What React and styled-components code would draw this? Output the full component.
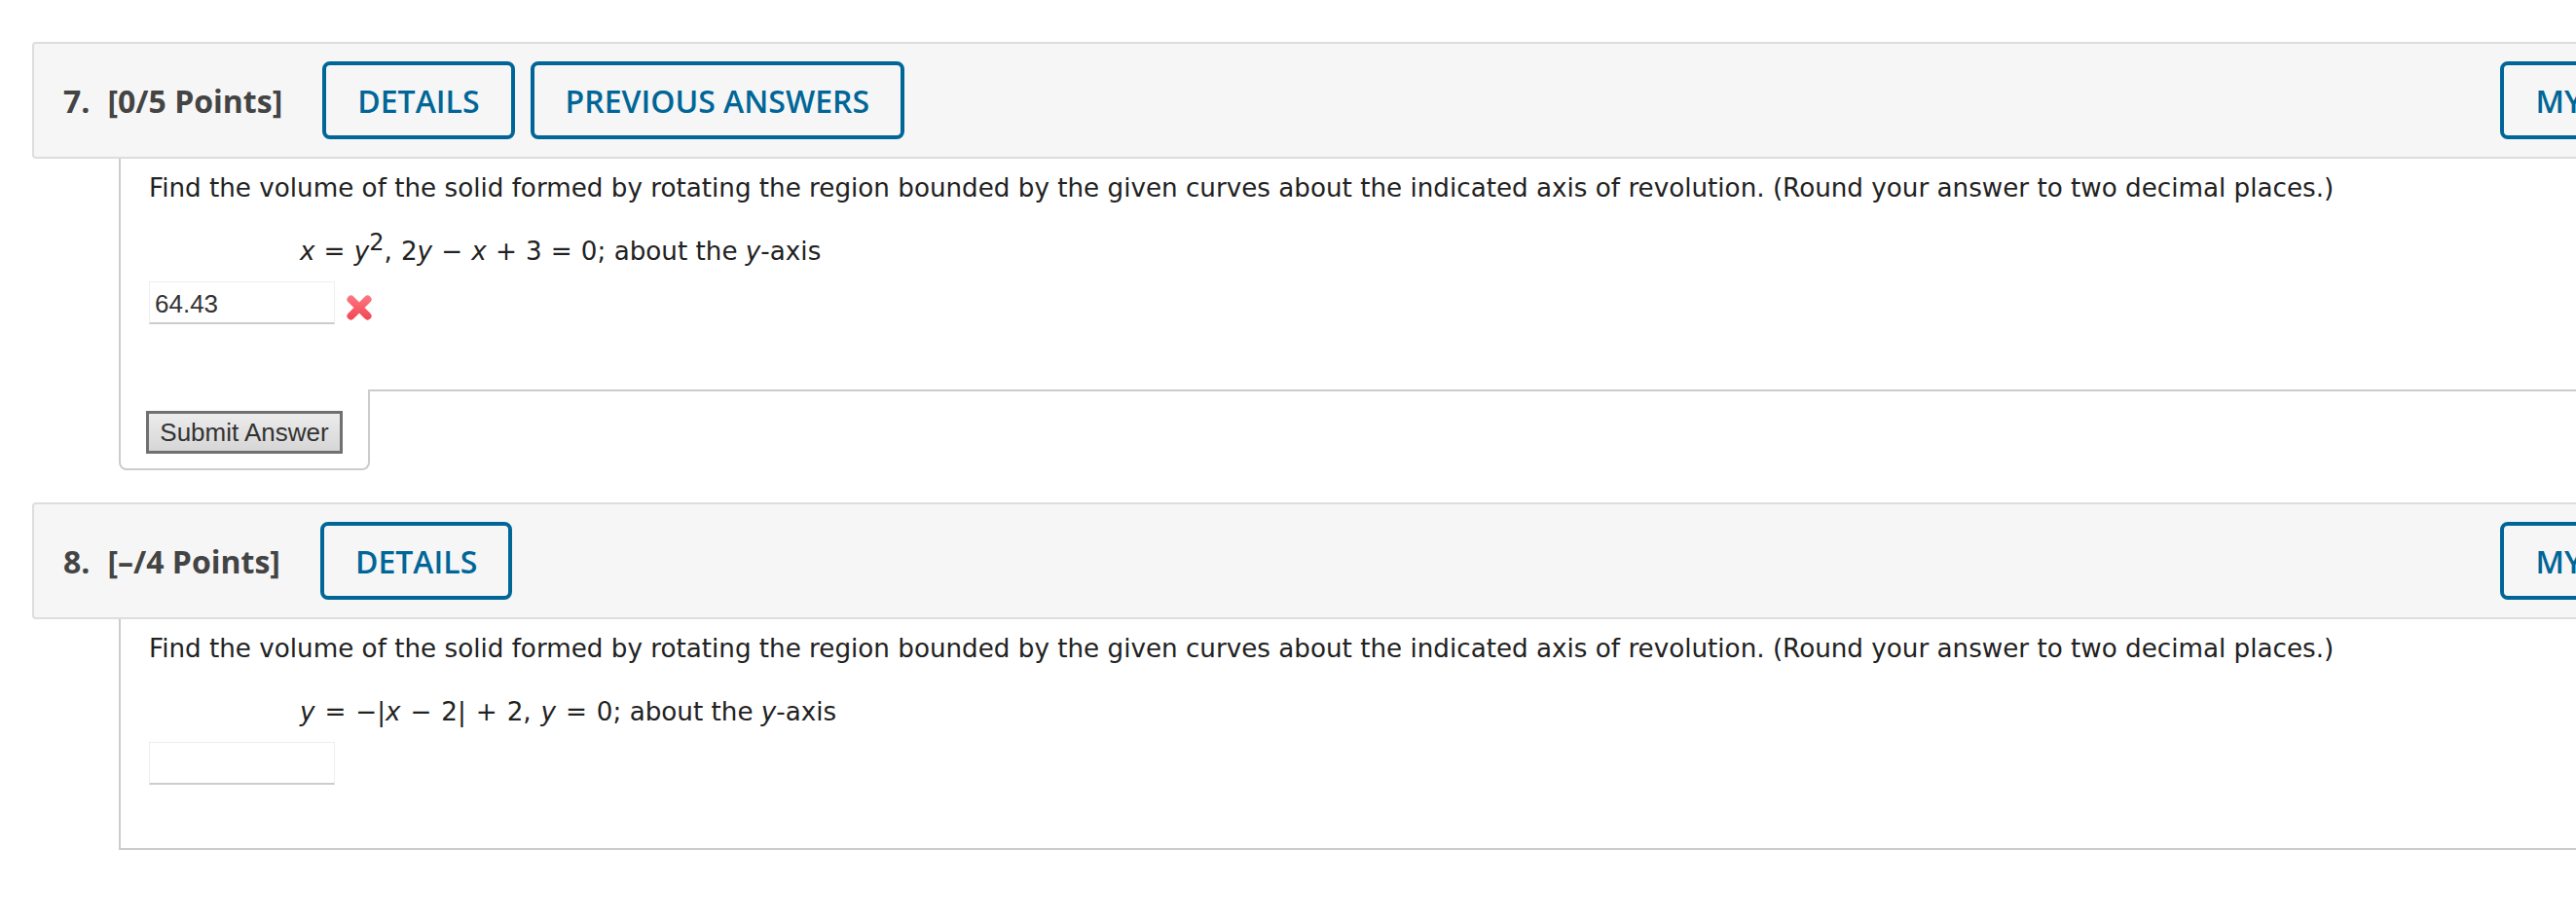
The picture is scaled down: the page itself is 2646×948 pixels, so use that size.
import React from 'react'
import styled, { createGlobalStyle } from 'styled-components'

const Global = createGlobalStyle`
  html, body { margin: 0; padding: 0; background: #fff; overflow: hidden; }
  body { width: 2646px; height: 948px; }
`

const Page = styled.div`
  width: 2842px;
  padding: 43px 0 0 33px;
  box-sizing: border-box;
  color: #222;
  font-family: "DejaVu Sans", Verdana, sans-serif;
`

const Question = styled.section`
  margin-bottom: ${p => p.$gap || 0}px;
`

const Header = styled.header`
  display: flex;
  align-items: center;
  height: 120px;
  box-sizing: border-box;
  padding: 0 39px 0 30px;
  background: #f6f6f6;
  border: 2px solid #ddd;
  border-radius: 4px;
`

const Title = styled.h2`
  margin: 0 41px 0 0;
  font: 700 32px "Open Sans", sans-serif;
  color: #444;
  white-space: nowrap;
  span { margin-right: 18px; }
`

const ActionButton = styled.button`
  height: 80px;
  padding: 0 32px;
  margin-right: 16px;
  box-sizing: border-box;
  background: transparent;
  border: 4px solid #006698;
  border-radius: 8px;
  color: #006698;
  font: 600 32px "Open Sans", sans-serif;
  white-space: nowrap;
  ${p => p.$right && 'margin-left: auto; margin-right: 0;'}
`

const Body = styled.div`
  margin-left: 89px;
  padding: 10px 0 0 29px;
  height: ${p => p.$height}px;
  box-sizing: border-box;
  border-left: 2px solid #ccc;
  ${p => p.$closed && 'border-bottom: 2px solid #ccc;'}
`

const Prompt = styled.p`
  margin: 0;
  font-size: 26.2px;
  line-height: 40px;
`

const Equation = styled.p`
  margin: 25px 0 0 155px;
  font-size: 26.2px;
  line-height: 40px;
  white-space: nowrap;
  i { font-style: italic; }
  sup { font-size: 24px; line-height: 0; }
`

const MathPart = styled.span`
  word-spacing: ${p => p.$spacing}px;
`

const AnswerRow = styled.div`
  display: flex;
  align-items: center;
  gap: 11px;
  margin-top: 11px;
`

const AnswerInput = styled.input`
  width: 191px;
  height: 44px;
  box-sizing: border-box;
  padding: 3px 5px 0;
  background: #fff;
  color: #333;
  border: 1px solid #eee;
  border-bottom: 2px solid #ccc;
  font: 26px "Liberation Sans", Arial, sans-serif;
  outline: none;
`

const WrongMark = styled.svg`
  width: 28px;
  height: 28px;
  margin-top: 9px;
`

const Footer = styled.div`
  display: flex;
  margin-left: 89px;
`

const SubmitTab = styled.div`
  width: 258px;
  height: 83px;
  box-sizing: border-box;
  padding: 22px 0 0 26px;
  border-left: 2px solid #ccc;
  border-right: 2px solid #ccc;
  border-bottom: 2px solid #ccc;
  border-radius: 0 0 8px 8px;
`

const Rule = styled.div`
  flex: 1;
  border-top: 2px solid #ccc;
`

const SubmitButton = styled.button`
  display: block;
  width: 202px;
  height: 44px;
  padding: 0;
  box-sizing: border-box;
  border: 3px solid #707070;
  background: linear-gradient(#ececec, #d6d6d6);
  color: #333;
  font: 26px "Liberation Sans", Arial, sans-serif;
`

export default function App() {
  return (
    <Page>
      <Global />
      <Question $gap={33}>
        <Header>
          <Title><span>7.</span>[0/5 Points]</Title>
          <ActionButton>DETAILS</ActionButton>
          <ActionButton>PREVIOUS ANSWERS</ActionButton>
          <ActionButton $right>MY NOTES</ActionButton>
        </Header>
        <Body $height={237}>
          <Prompt>Find the volume of the solid formed by rotating the region bounded by the given curves about the indicated axis of revolution. (Round your answer to two decimal places.)</Prompt>
          <Equation>
            <MathPart $spacing={0.8}><i>x</i> = <i>y</i><sup>2</sup>, 2<i>y</i> − <i>x</i> + 3 = 0;</MathPart> about the <i>y</i>-axis
          </Equation>
          <AnswerRow>
            <AnswerInput defaultValue="64.43" />
            <WrongMark viewBox="0 0 28 28">
              <defs>
                <linearGradient id="wrongFill" x1="0" y1="0" x2="0" y2="28" gradientUnits="userSpaceOnUse">
                  <stop offset="0" stopColor="#ff7a84" />
                  <stop offset="1" stopColor="#f04450" />
                </linearGradient>
              </defs>
              <path d="M5.5 5.5 L22.5 22.5 M22.5 5.5 L5.5 22.5" fill="none" stroke="url(#wrongFill)" strokeWidth="8" strokeLinecap="round" />
            </WrongMark>
          </AnswerRow>
        </Body>
        <Footer>
          <SubmitTab><SubmitButton>Submit Answer</SubmitButton></SubmitTab>
          <Rule />
        </Footer>
      </Question>
      <Question>
        <Header>
          <Title><span>8.</span>[–/4 Points]</Title>
          <ActionButton>DETAILS</ActionButton>
          <ActionButton $right>MY NOTES</ActionButton>
        </Header>
        <Body $height={237} $closed>
          <Prompt>Find the volume of the solid formed by rotating the region bounded by the given curves about the indicated axis of revolution. (Round your answer to two decimal places.)</Prompt>
          <Equation>
            <MathPart $spacing={1.6}><i>y</i> = −|<i>x</i> − 2| + 2, <i>y</i> = 0;</MathPart> about the <i>y</i>-axis
          </Equation>
          <AnswerRow>
            <AnswerInput />
          </AnswerRow>
        </Body>
      </Question>
    </Page>
  )
}
